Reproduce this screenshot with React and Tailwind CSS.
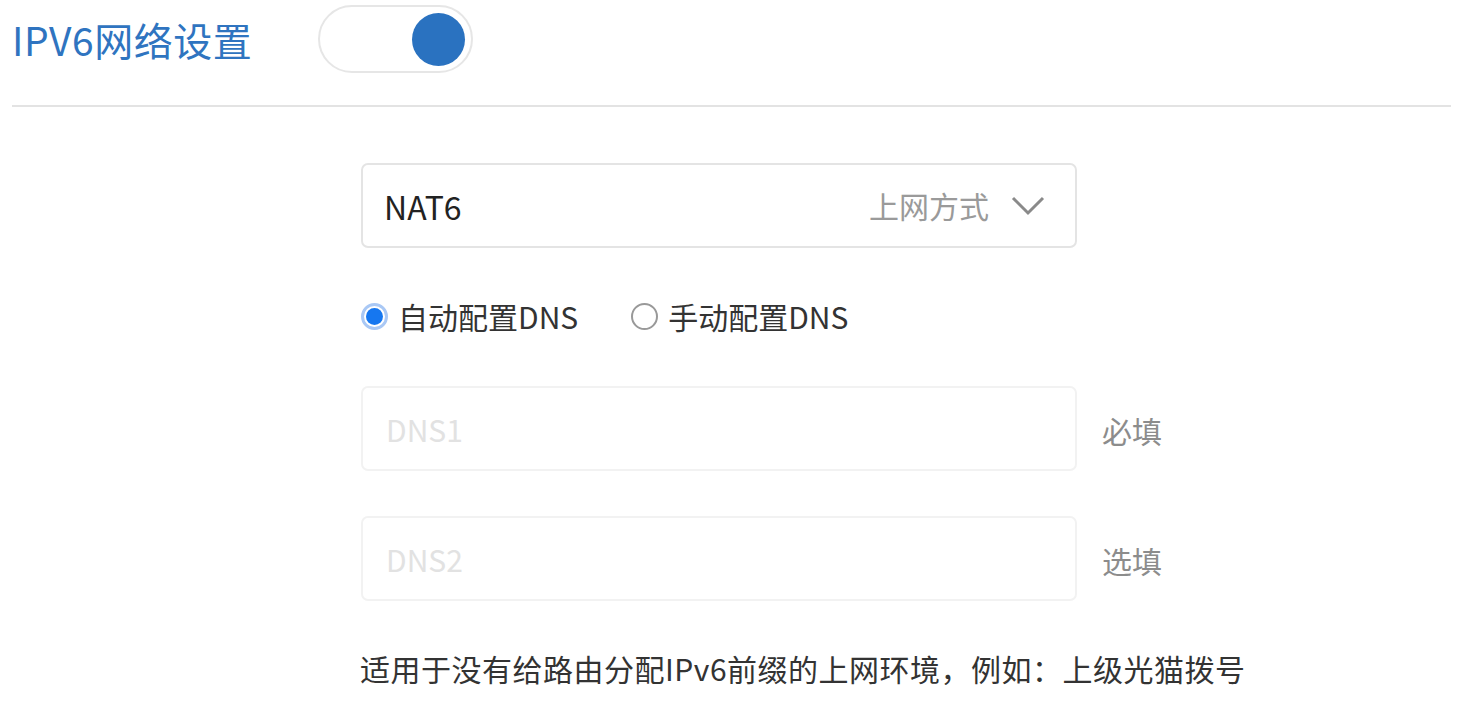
import { useState } from "react";

export default function App() {
  const [enabled, setEnabled] = useState(true);
  const [dnsMode, setDnsMode] = useState("auto");

  return (
    <div
      className="w-[1463px] h-[701px] bg-white overflow-hidden"
      style={{ fontFamily: '"Noto Sans CJK SC", "Noto Sans", sans-serif' }}
    >
      {/* 标题栏 */}
      <div className="flex items-center pl-[12px] pt-[5px] h-[73px]">
        <h1 className="text-[39px] leading-none text-[#2f74c0] tracking-[0.5px]">IPV6网络设置</h1>
        <button
          onClick={() => setEnabled(!enabled)}
          className="ml-[66px] w-[155px] h-[68px] rounded-full border-2 border-[#e6e6e6] bg-white flex items-center px-[6px]"
        >
          <span
            className={
              "w-[53px] h-[53px] rounded-full bg-[#2a72c0] " +
              (enabled ? "ml-auto" : "")
            }
          />
        </button>
      </div>

      <div className="mx-[12px] mt-[32px] h-[2px] bg-[#e3e3e3]" />

      {/* 表单 */}
      <div className="ml-[361px] w-[716px] mt-[56px]">
        <div className="h-[85px] border-2 border-[#e4e4e4] rounded-[7px] flex items-center pl-[21px] pr-[30px]">
          <span className="text-[32px] text-[#222]">NAT6</span>
          <span className="ml-auto text-[30px] text-[#9a9a9a]">上网方式</span>
          <svg width="34" height="20" viewBox="0 0 34 20" className="ml-[22px]">
            <path d="M2 2 L17 17 L32 2" fill="none" stroke="#8a8a8a" strokeWidth="3" />
          </svg>
        </div>

        <div className="flex items-center mt-[48px] h-[40px] text-[30px] text-[#333]">
          <label className="flex items-center cursor-pointer" onClick={() => setDnsMode("auto")}>
            <span
              className={
                "w-[27px] h-[27px] rounded-full flex items-center justify-center " +
                (dnsMode === "auto" ? "border-[3px] border-[#a9c8f5]" : "border-2 border-[#999]")
              }
            >
              {dnsMode === "auto" && <span className="w-[17px] h-[17px] rounded-full bg-[#1677f0]" />}
            </span>
            <span className="ml-[10px]">自动配置DNS</span>
          </label>
          <label className="flex items-center cursor-pointer ml-[53px]" onClick={() => setDnsMode("manual")}>
            <span
              className={
                "w-[27px] h-[27px] rounded-full flex items-center justify-center " +
                (dnsMode === "manual" ? "border-[3px] border-[#a9c8f5]" : "border-2 border-[#999]")
              }
            >
              {dnsMode === "manual" && <span className="w-[17px] h-[17px] rounded-full bg-[#1677f0]" />}
            </span>
            <span className="ml-[10px]">手动配置DNS</span>
          </label>
        </div>

        <div className="relative mt-[50px]">
          <input
            placeholder="DNS1"
            disabled={dnsMode === "auto"}
            className="w-full h-[85px] border-2 border-[#f2f2f2] rounded-[7px] pl-[23px] text-[30px] bg-white placeholder:text-[#e2e2e2] outline-none"
          />
          <span className="absolute left-[741px] top-[22px] whitespace-nowrap text-[30px] text-[#8c8c8c]">必填</span>
        </div>

        <div className="relative mt-[45px]">
          <input
            placeholder="DNS2"
            disabled={dnsMode === "auto"}
            className="w-full h-[85px] border-2 border-[#f2f2f2] rounded-[7px] pl-[23px] text-[30px] bg-white placeholder:text-[#e2e2e2] outline-none"
          />
          <span className="absolute left-[741px] top-[22px] whitespace-nowrap text-[30px] text-[#8c8c8c]">选填</span>
        </div>

        <p className="mt-[45px] text-[30px] text-[#333] whitespace-nowrap tracking-[0.5px] -ml-[1px]">
          适用于没有给路由分配IPv6前缀的上网环境，例如：上级光猫拨号
        </p>
      </div>
    </div>
  );
}
